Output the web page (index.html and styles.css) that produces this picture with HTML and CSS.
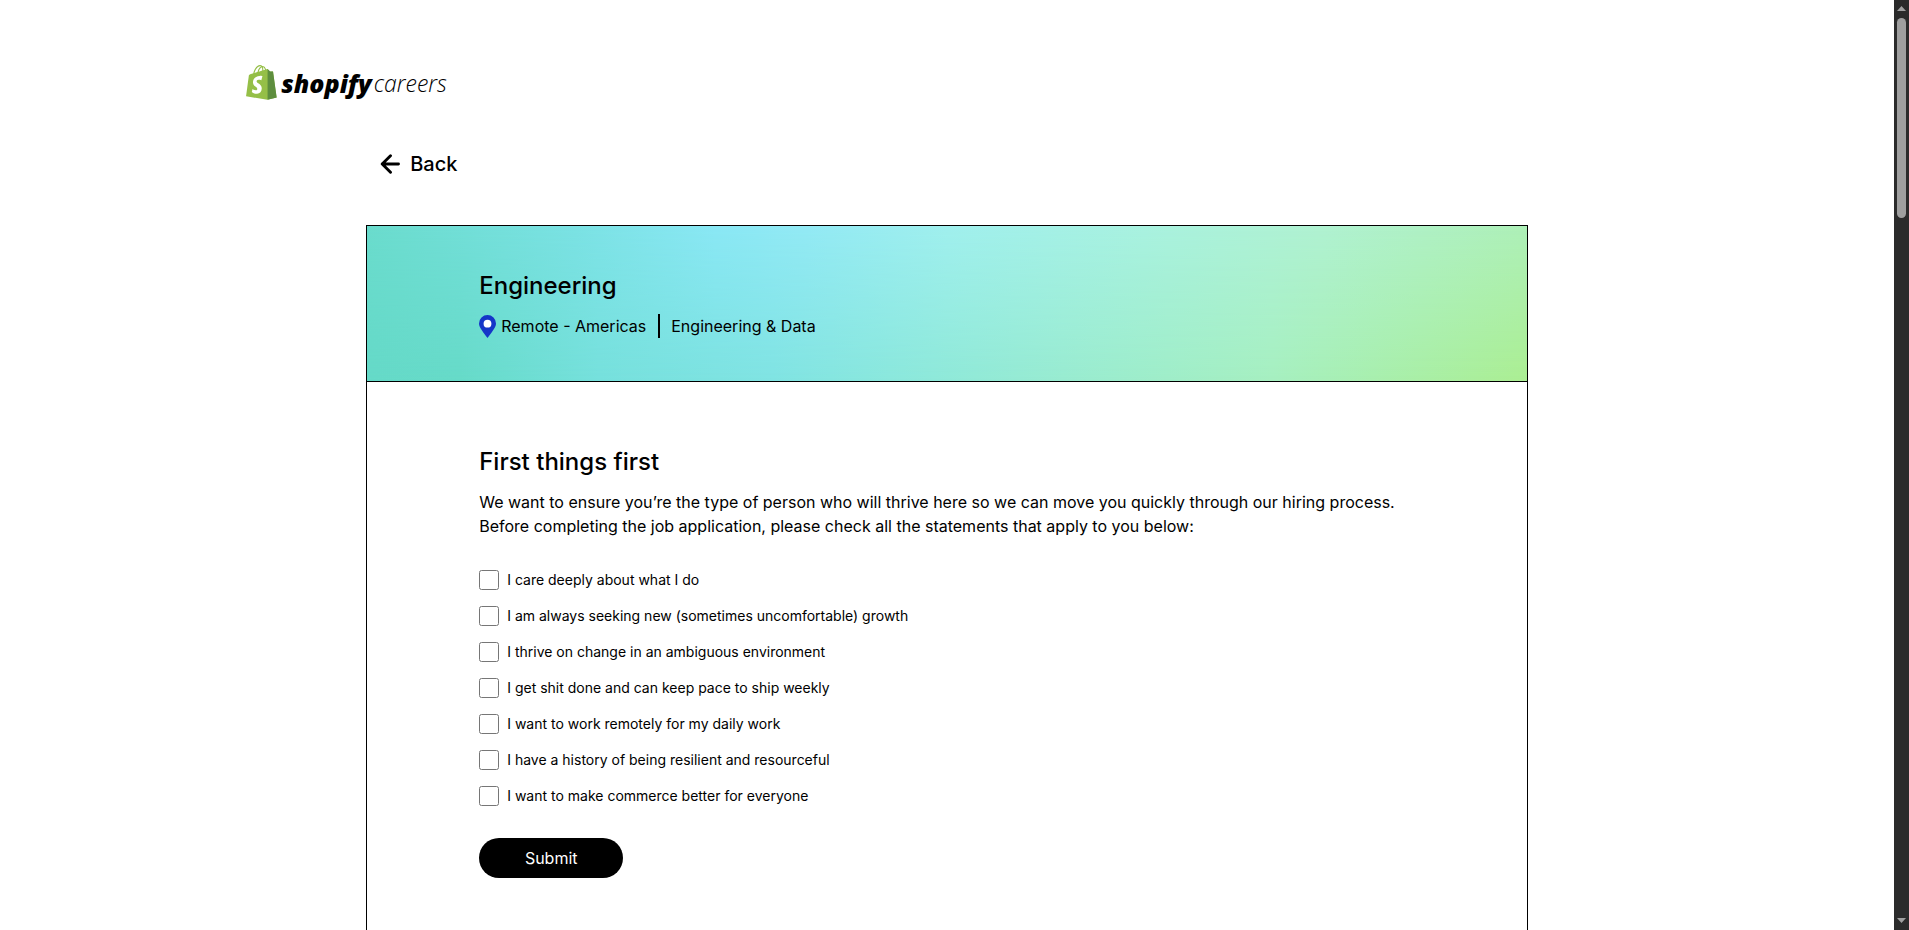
FILE: index.html
```
<!DOCTYPE html>
<html lang="en">
<head>
  <meta charset="utf-8">
  <meta name="viewport" content="width=device-width, initial-scale=1">
  <title>Engineering | Shopify Careers</title>
  <link rel="stylesheet" href="styles.css">
</head>
<body>
  <div class="window">
    <div class="page">
      <div class="container">
        <header class="site-header">
          <a class="logo" href="#">
            <svg class="logo-bag" viewBox="0 0 109.5 124.5" aria-hidden="true">
              <path fill="#95bf47" fill-rule="evenodd" d="M95.9 23.9c-.1-.6-.6-1-1.1-1-.5 0-9.3-.2-9.3-.2s-7.4-7.2-8.1-7.9c-.7-.7-2.2-.5-2.7-.3 0 0-1.4.4-3.7 1.1-.4-1.3-1-2.8-1.8-4.4-2.6-5-6.5-7.7-11.1-7.7-.3 0-.6 0-1 .1-.1-.2-.3-.3-.4-.5-2-2.2-4.6-3.2-7.7-3.1-6 .2-12 4.5-16.8 12.2-3.4 5.4-6 12.2-6.7 17.5-6.9 2.1-11.7 3.6-11.8 3.7-3.5 1.1-3.6 1.2-4 4.5-.3 2.5-9.5 73-9.5 73l75.6 13.1 32.8-8.1c-.1-.1-12.6-91.4-12.7-92zM67.2 16.8l-5.8 1.8c0-3-.4-7.3-1.8-10.9 4.6.8 6.8 6 7.6 9.1zM57.5 19.8l-12.6 3.9c1.2-4.7 3.6-9.4 6.4-12.5 1.1-1.1 2.6-2.4 4.3-3.2 1.7 3.6 2 8.5 1.9 11.8zM49.4 4.1c1.4 0 2.6.3 3.6.9-1.6.8-3.2 2.1-4.7 3.6-3.8 4.1-6.7 10.5-7.9 16.6-3.6 1.1-7.2 2.2-10.5 3.2 2.1-9.5 10.2-24 19.5-24.3z"/>
              <path fill="#5e8e3e" d="M94.8 22.9c-.5 0-9.3-.2-9.3-.2s-7.4-7.2-8.1-7.9c-.3-.3-.6-.4-1-.5v109.7l32.8-8.1S96 24.5 95.9 23.9c-.1-.6-.6-1-1.1-1z"/>
              <path fill="#fff" d="M58 39.9l-3.8 14.4s-4.3-2-9.4-1.6c-7.500.5-7.500 5.200-7.500 6.400.4 6.400 17.300 7.800 18.300 22.900.7 11.900-6.300 20-16.400 20.600-12.200.8-18.900-6.400-18.900-6.400l2.600-11s6.700 5.100 12.100 4.700c3.500-.2 4.800-3.100 4.700-5.100-.5-8.400-14.300-7.900-15.200-21.700-.7-11.600 6.900-23.400 23.700-24.400 6.500-.6 9.800 1.200 9.800 1.200z"/>
            </svg>
            <span class="logo-name">shopify</span>
            <span class="logo-section">careers</span>
          </a>
        </header>

        <main class="content">
          <a class="back" href="#">
            <svg class="back-arrow" viewBox="0 0 20 20" aria-hidden="true">
              <path d="M10.500 1.800 2.200 10l8.300 8.200M2.200 10h16.300" fill="none" stroke="#000" stroke-width="2.900" stroke-linecap="round" stroke-linejoin="round"/>
            </svg>
            Back
          </a>

          <article class="card">
            <div class="card-header">
              <h1 class="heading">Engineering</h1>
              <div class="meta">
                <span class="location">
                  <svg class="pin" viewBox="0 0 17 23" aria-hidden="true">
                    <path fill="#1536c8" d="M8.500 0A8.500 8.500 0 0 0 0 8.500C0 11.500 1.800 14.200 8.500 23 15.200 14.200 17 11.500 17 8.500A8.500 8.500 0 0 0 8.500 0z"/>
                    <circle cx="8.500" cy="8.700" r="3.900" fill="#fff"/>
                  </svg>
                  Remote - Americas
                </span>
                <span class="department">Engineering &amp; Data</span>
              </div>
            </div>

            <form class="form">
              <h2 class="heading">First things first</h2>
              <p class="intro">We want to ensure you’re the type of person who will thrive here so we can move you quickly through our hiring process. Before completing the job application, please check all the statements that apply to you below:</p>
              <div class="statements">
                <label class="statement"><input class="check" type="checkbox">I care deeply about what I do</label>
                <label class="statement"><input class="check" type="checkbox">I am always seeking new (sometimes uncomfortable) growth</label>
                <label class="statement"><input class="check" type="checkbox">I thrive on change in an ambiguous environment</label>
                <label class="statement"><input class="check" type="checkbox">I get shit done and can keep pace to ship weekly</label>
                <label class="statement"><input class="check" type="checkbox">I want to work remotely for my daily work</label>
                <label class="statement"><input class="check" type="checkbox">I have a history of being resilient and resourceful</label>
                <label class="statement"><input class="check" type="checkbox">I want to make commerce better for everyone</label>
              </div>
              <button class="submit" type="button">Submit</button>
            </form>
          </article>
        </main>
      </div>
    </div>

    <div class="scrollbar" aria-hidden="true">
      <svg class="scroll-arrow" viewBox="0 0 9 5"><path fill="#a0a0a0" d="M4.500 0 9 5H0z"/></svg>
      <div class="scroll-track"><div class="scroll-thumb"></div></div>
      <svg class="scroll-arrow" viewBox="0 0 9 5"><path fill="#a0a0a0" d="M0 0h9L4.500 5z"/></svg>
    </div>
  </div>
</body>
</html>
```
FILE: styles.css
```
* {
  box-sizing: border-box;
}

body {
  margin: 0;
  background: #fff;
  color: #000;
  font-family: Inter, "Liberation Sans", sans-serif;
  font-size: 16px;
  line-height: 24px;
}

h1,
h2,
p {
  margin: 0;
}

a {
  color: inherit;
  text-decoration: none;
}

.window {
  display: flex;
  height: 100vh;
}

.page {
  flex: 1;
  overflow: hidden;
  padding-top: 65px;
}

.container {
  width: 74%;
  margin: 0 auto;
}

.site-header {
  display: flex;
}

.logo {
  display: flex;
  height: 35px;
  font-family: "Open Sans", "Noto Sans", sans-serif;
  font-style: italic;
  line-height: 37px;
}

.logo-bag {
  width: 31px;
  height: 35px;
  margin-right: 4px;
}

.logo-name {
  font-size: 25px;
  font-weight: 800;
}

.logo-section {
  margin-left: 2px;
  font-size: 23px;
  font-weight: 300;
}

.content {
  padding: 48px 120px 0;
}

.back {
  display: inline-flex;
  align-items: center;
  gap: 10px;
  height: 32px;
  padding-left: 14px;
  font-size: 20px;
  font-weight: 500;
}

.back-arrow {
  width: 20px;
  height: 20px;
}

.card {
  min-height: 100vh;
  margin-top: 45px;
  border: 1px solid #000;
}

.card-header {
  position: relative;
  isolation: isolate;
  padding: 44px 112px 43px;
  border-bottom: 1px solid #000;
  background: linear-gradient(90deg, #6adccd, #7be2e4 18%, #8ae8f5 30%, #93eaf5 38%, #a0f0ee 50%, #a9f2e0 67%, #b0f2d2 82%, #aef0b8);
}

/* Second colour run, fading in toward the bottom edge */
.card-header::before {
  content: "";
  position: absolute;
  inset: 0;
  z-index: -1;
  background: linear-gradient(90deg, #65d9c7, #66dac8 8%, #76e0dc 20%, #80e3e2 35%, #8ae7dc 45%, #98ebd0 60%, #a6efc0 78%, #abee92);
  mask-image: linear-gradient(transparent, #000);
}

.heading {
  font-size: 24px;
  font-weight: 500;
  line-height: 32px;
}

.meta {
  display: flex;
  margin-top: 12px;
}

.location {
  display: flex;
  align-items: center;
  gap: 5px;
}

.pin {
  width: 17px;
  height: 23px;
}

.department {
  margin-left: 12px;
  padding-left: 11px;
  border-left: 2px solid #000;
}

.form {
  padding: 64px 112px;
}

.intro {
  margin-top: 12px;
}

.statements {
  display: grid;
  gap: 16px;
  margin-top: 32px;
}

.statement {
  display: flex;
  align-items: center;
  justify-self: start;
  font-size: 14px;
  line-height: 20px;
}

.check {
  width: 20px;
  height: 20px;
  margin: 0 8px 0 0;
}

.submit {
  display: block;
  width: 144px;
  height: 40px;
  margin-top: 32px;
  border: 0;
  border-radius: 20px;
  background: #000;
  color: #fff;
  font: inherit;
}

.scrollbar {
  display: flex;
  flex-direction: column;
  align-items: center;
  gap: 7px;
  width: 15px;
  padding: 6px 0 7px;
  background: #2b2b2b;
}

.scroll-arrow {
  width: 9px;
  height: 5px;
}

.scroll-track {
  flex: 1;
}

.scroll-thumb {
  width: 9px;
  height: 200px;
  border-radius: 5px;
  background: #9f9f9f;
}
```
